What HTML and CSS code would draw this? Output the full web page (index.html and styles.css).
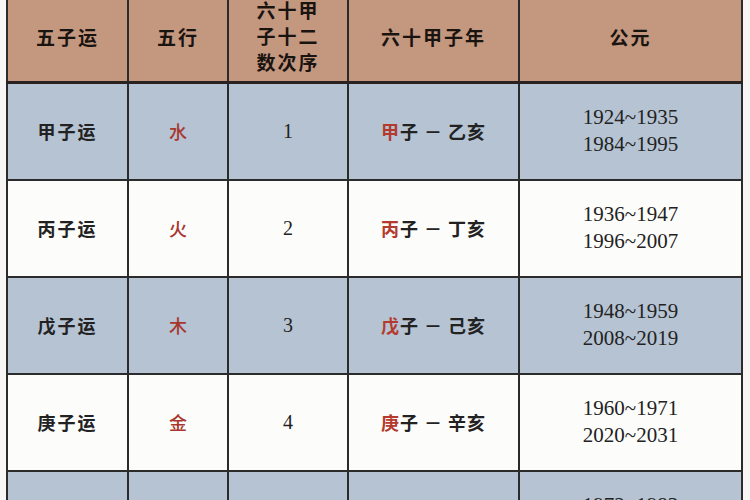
FILE: index.html
```html
<!DOCTYPE html>
<html lang="zh">
<head>
<meta charset="utf-8">
<link rel="stylesheet" href="styles.css">
</head>
<body>
<div class="page">
<table class="yun">
  <colgroup>
    <col class="c1"><col class="c2"><col class="c3"><col class="c4"><col class="c5">
  </colgroup>
  <thead>
    <tr>
      <th>五子运</th>
      <th>五行</th>
      <th class="multi">六十甲<br>子十二<br>数次序</th>
      <th>六十甲子年</th>
      <th>公元</th>
    </tr>
  </thead>
  <tbody>
    <tr class="blue">
      <td class="name">甲子运</td>
      <td class="el">水</td>
      <td class="num">1</td>
      <td class="span"><span class="red">甲</span>子 － 乙亥</td>
      <td class="years">1924~1935<br>1984~1995</td>
    </tr>
    <tr class="white">
      <td class="name">丙子运</td>
      <td class="el">火</td>
      <td class="num">2</td>
      <td class="span"><span class="red">丙</span>子 － 丁亥</td>
      <td class="years">1936~1947<br>1996~2007</td>
    </tr>
    <tr class="blue">
      <td class="name">戊子运</td>
      <td class="el">木</td>
      <td class="num">3</td>
      <td class="span"><span class="red">戊</span>子 － 己亥</td>
      <td class="years">1948~1959<br>2008~2019</td>
    </tr>
    <tr class="white">
      <td class="name">庚子运</td>
      <td class="el">金</td>
      <td class="num">4</td>
      <td class="span"><span class="red">庚</span>子 － 辛亥</td>
      <td class="years">1960~1971<br>2020~2031</td>
    </tr>
    <tr class="blue">
      <td class="name">壬子运</td>
      <td class="el">土</td>
      <td class="num">5</td>
      <td class="span"><span class="red">壬</span>子 － 癸亥</td>
      <td class="years">1972~1983<br>2032~2043</td>
    </tr>
  </tbody>
</table>
</div>
</body>
</html>
```

FILE: styles.css
```css
html, body {
  margin: 0;
  padding: 0;
  background: #f7f6f4;
  overflow: hidden;
}
.page {
  width: 750px;
  height: 500px;
  overflow: hidden;
  padding-left: 6px;
  box-sizing: border-box;
}
.yun {
  margin-top: -11px;
  border-collapse: collapse;
  table-layout: fixed;
  width: 737px;
  font-family: "Noto Sans CJK SC", sans-serif;
  color: #1e1e1e;
}
.c1 { width: 121px; }
.c2 { width: 100px; }
.c3 { width: 120px; }
.c4 { width: 171px; }
.yun th, .yun td {
  border: 2px solid #2b2b2b;
  text-align: center;
  vertical-align: middle;
  padding: 0;
}
.yun thead th {
  background: #c4977f;
  height: 90px;
  font-size: 19px;
  font-weight: 700;
  letter-spacing: 2px;
  color: #1a1410;
  border-bottom: 3px solid #2a2220;
}
.yun th.multi {
  line-height: 26px;
}
.yun tbody tr {
  height: 97px;
}
.blue td { background: #b5c3d3; }
.white td { background: #fcfcfb; }
.name {
  font-size: 18px;
  font-weight: 700;
  letter-spacing: 2px;
  color: #222;
}
.el {
  font-size: 18px;
  font-weight: 500;
  color: #a8362e;
}
.num {
  font-family: "Liberation Serif", serif;
  font-size: 20px;
  color: #222;
}
.span {
  font-size: 18px;
  font-weight: 700;
  letter-spacing: 1px;
  color: #222;
  white-space: nowrap;
}
.red { color: #b43a2e; }
.years {
  font-family: "Liberation Serif", serif;
  font-size: 21px;
  line-height: 27px;
  color: #222;
}
```
